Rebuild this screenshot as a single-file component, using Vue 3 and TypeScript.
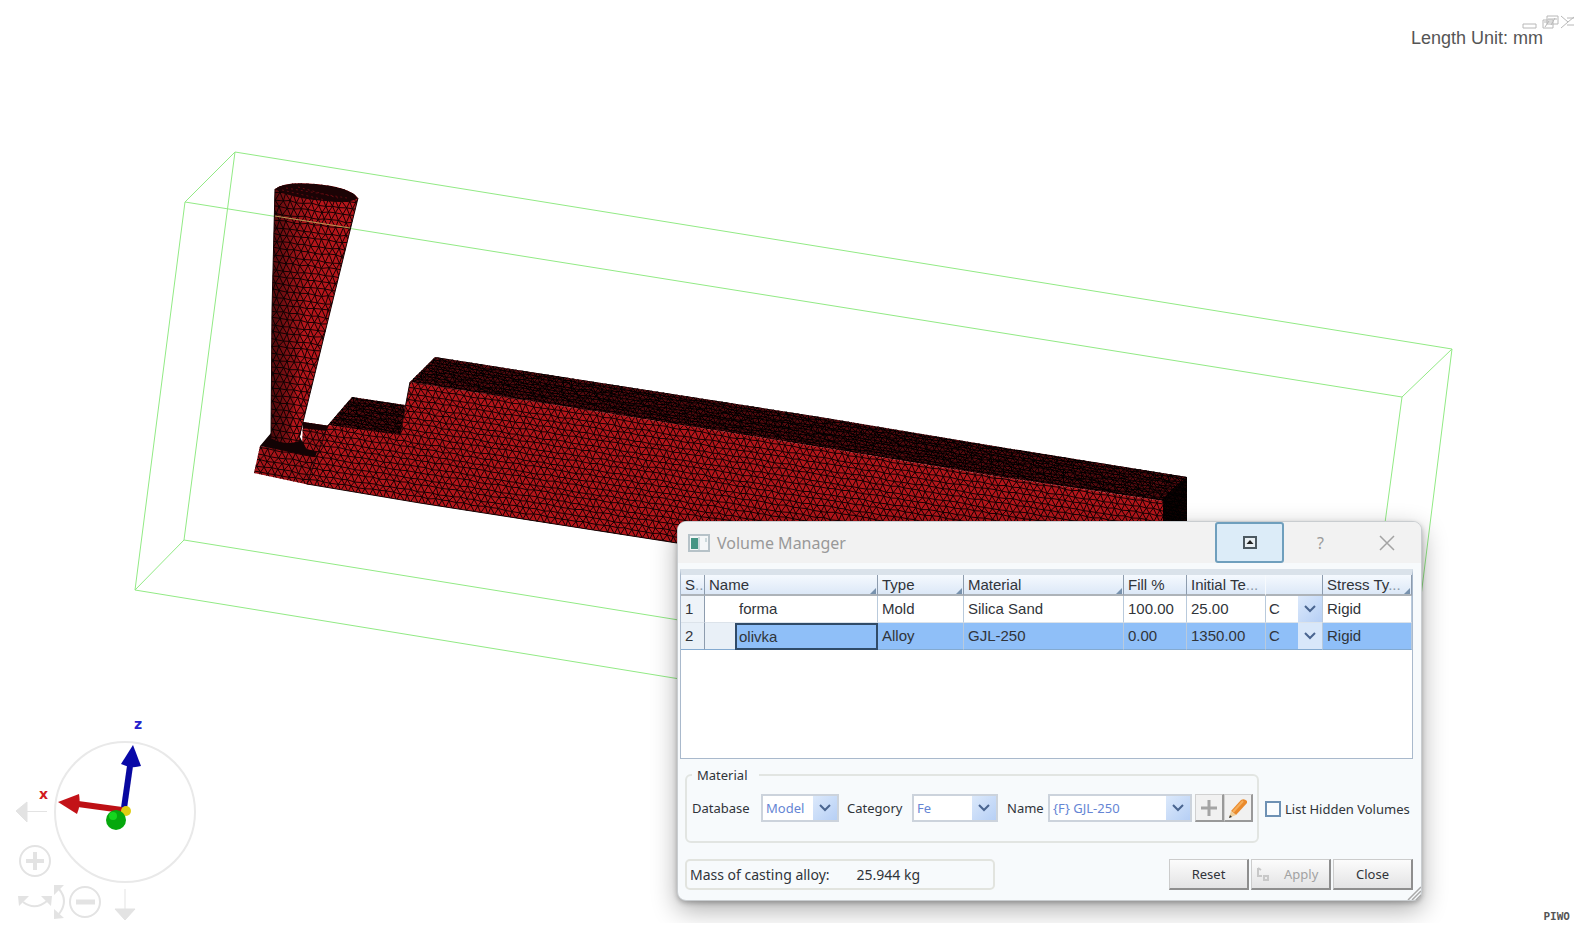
<script setup lang="ts">
import { ref } from 'vue'

interface Volume {
  id: number
  name: string
  type: string
  material: string
  fill: string
  temperature: string
  stress: string
}

const volumes: Volume[] = [
  { id: 1, name: 'forma', type: 'Mold', material: 'Silica Sand', fill: '100.00', temperature: '25.00', stress: 'Rigid' },
  { id: 2, name: 'olivka', type: 'Alloy', material: 'GJL-250', fill: '0.00', temperature: '1350.00', stress: 'Rigid' },
]
const selected = ref(2)
const listHidden = ref(false)

// Builds a jittered triangle grid, leaning along the given slope
function mesh(x: number, y: number, w: number, h: number, dx: number, dy: number, slope: number, jitter: number): string {
  let seed = 7
  const rnd = () => {
    seed = (seed * 16807) % 2147483647
    return seed / 2147483647 - 0.5
  }
  const cols = Math.ceil(w / dx)
  const rows = Math.ceil(h / dy)
  const pts: string[][] = []
  for (let r = 0; r <= rows; r++) {
    const line: string[] = []
    for (let c = 0; c <= cols; c++) {
      const px = x + c * dx + (r % 2 ? dx / 2 : 0) + rnd() * dx * jitter
      const py = y + r * dy + c * dx * slope + rnd() * dy * jitter
      line.push(px.toFixed(1) + ' ' + py.toFixed(1))
    }
    pts.push(line)
  }
  const out: string[] = []
  for (let r = 0; r < rows; r++) {
    out.push('M' + pts[r].join('L'))
    const zig: string[] = []
    for (let c = 0; c <= cols; c++) {
      if (r % 2) zig.push(pts[r + 1][c], pts[r][c])
      else zig.push(pts[r][c], pts[r + 1][c])
    }
    out.push('M' + zig.join('L'))
  }
  return out.join('')
}

// The grid rows start higher than the face so that the slope covers all of it
const frontMesh = mesh(250, 345, 930, 240, 7, 6, 0.155, 0.25)
const topMesh = mesh(310, 335, 890, 110, 5, 3, 0.155, 0.6)
const sprueMesh = mesh(262, 170, 104, 285, 7, 7, 0.12, 0.25)
const baseMesh = mesh(250, 405, 75, 85, 7, 6, 0.16, 0.25)
</script>

<template>
  <main class="workspace">
    <svg class="scene" viewBox="0 0 1589 941" role="img" aria-label="Meshed casting model">
      <defs>
        <clipPath id="front"><path d="M410 382L820 447L1000 477L1163 501V560H790L677 543L420 503L307 484L328 425L400 435Z" /></clipPath>
        <clipPath id="tops"><path d="M410 382L435 357L820 417L1000 447L1187 477V560H1163V501L1000 477L820 447ZM328 425L352 397L405 405L402 437Z" /></clipPath>
        <clipPath id="sprue"><path d="M275 189Q285 181 316 184Q350 187 358 198L303 422L299 441Q285 446 271 438L272 310Z" /></clipPath>
        <clipPath id="base"><path d="M260 446L316 455L310 485L254 473ZM303 422L330 426L315 462L302 446Z" /></clipPath>
        <linearGradient id="shade" x1="0" x2="1">
          <stop offset="0" stop-color="#000" stop-opacity=".6" />
          <stop offset=".5" stop-color="#000" stop-opacity=".2" />
          <stop offset="1" stop-color="#000" stop-opacity="0" />
        </linearGradient>
      </defs>

      <path class="bounds" d="M235 152L1452 349L1402 397L185 202ZM185 202L135 590L184 540L235 152M135 590L790 697M184 540L790 638M1402 397L1380 560M1452 349L1413 660" />

      <g clip-path="url(#base)">
        <rect x="250" y="415" width="80" height="75" fill="#a51419" />
        <path :d="baseMesh" class="wire" />
        <path d="M302 421L331 425L327 431L301 428Z" fill="#180305" />
      </g>
      <path d="M260 446L271 433L300 437L306 449L317 452L315 457Z" fill="#120304" />
      <g clip-path="url(#tops)">
        <rect x="300" y="340" width="900" height="230" fill="#540a0e" />
        <path :d="topMesh" class="wire dense" />
        <path d="M1163 498L1187 477V560H1163Z" fill="#000" opacity=".8" />
      </g>
      <g clip-path="url(#front)">
        <rect x="300" y="370" width="880" height="200" fill="#b4161b" />
        <path :d="frontMesh" class="wire" />
      </g>
      <g clip-path="url(#sprue)">
        <rect x="260" y="175" width="110" height="280" fill="#b5161b" />
        <path :d="sprueMesh" class="wire" />
        <path d="M270 180L316 190L290 445H270Z" fill="url(#shade)" />
        <path d="M275 189Q285 181 316 184Q350 187 358 198Q350 204 325 201Q290 198 275 189Z" fill="#1b0305" />
        <path d="M286 188L347 198M298 187L338 198M282 190L325 200" stroke="#610b10" stroke-dasharray="2 3" />
      </g>
      <path d="M275 189L272 310L271 438M358 198L303 422L299 438M410 382L400 435M328 425L307 484L420 503L677 543L790 560" class="edge" />
      <path d="M275 216L350 228" stroke="#b99a54" fill="none" />

      <circle cx="125" cy="812" r="70" fill="none" stroke="#e9e9e9" stroke-width="2" />
      <path d="M124 808L130 766" stroke="#0808a0" stroke-width="6" />
      <path d="M133 745L141 766Q131 769 121 764Z" fill="#0808a8" />
      <path d="M122 810L78 804" stroke="#bd1015" stroke-width="6" />
      <path d="M58 802L79 794Q81 805 77 814Z" fill="#c31218" />
      <circle cx="126" cy="811" r="5" fill="#dfce12" />
      <circle cx="116" cy="820" r="10" fill="#05a80d" />
      <circle cx="113" cy="816" r="4" fill="#15d61e" />
      <text x="134" y="729" class="axis" fill="#2522cc">z</text>
      <text x="39" y="799" class="axis" fill="#d21a20">x</text>

      <g fill="#e3e3e3" stroke="#e3e3e3">
        <path d="M16 811L27 802V822ZM27 811.500H47" />
        <path d="M125 889V910M115 909H135L125 920Z" />
        <circle cx="35" cy="861" r="15" fill="none" stroke-width="2" />
        <path d="M26 861H44M35 852V870" stroke-width="4" />
        <circle cx="85" cy="902" r="15" fill="none" stroke-width="2" />
        <path d="M76 902H95" stroke-width="5" />
        <path d="M18 896L29 896L19 906ZM52 896L41 896L51 906ZM54 885H64L54 895ZM54 909V919L64 918Z" stroke="none" />
        <path d="M23 902Q35 911 47 901M59 889Q69 901 59 914" fill="none" stroke-width="2" />
      </g>
    </svg>

    <div class="unit">Length Unit: mm</div>
    <div class="mdi" aria-hidden="true">
      <svg width="54" height="16" viewBox="0 0 54 16" fill="none" stroke="#b8b8b8">
        <path d="M3 9H16V13H3ZM23 5H33V13H23ZM27 1H38V9H27ZM24 7H32M28 4H37M29 6L25 12M35 3L31 10" />
        <path d="M41 1L48 7L41 13M54 2L48 7M47 10H54M47 3H54" />
      </svg>
    </div>
    <div class="stamp">PIWO</div>

    <section class="dialog" aria-labelledby="dialog-title">
      <header class="titlebar">
        <svg width="22" height="18" viewBox="0 0 22 18" aria-hidden="true">
          <rect x="1" y="1" width="20" height="16" fill="#f4f7f8" stroke="#b6c2c8" stroke-width="2" />
          <rect x="3" y="4" width="7" height="11" fill="#459584" />
          <path d="M11 3V16M18 4V8" stroke="#a5bcc0" />
        </svg>
        <h1 id="dialog-title">Volume Manager</h1>
        <button class="roll" type="button" aria-label="Roll up">
          <svg width="14" height="13" viewBox="0 0 14 13"><rect x="1" y="1" width="12" height="11" fill="#e9f0f4" stroke="#4c5961" stroke-width="2" /><path d="M3.500 8L7 4L10.500 8Z" fill="#222" /></svg>
        </button>
        <button class="plain help" type="button" aria-label="Help">?</button>
        <button class="plain" type="button" aria-label="Close window">
          <svg width="16" height="16" viewBox="0 0 16 16"><path d="M1 1L15 15M15 1L1 15" stroke="#a3a3a3" stroke-width="1.500" /></svg>
        </button>
      </header>

      <div class="content">
        <div class="grid-box">
          <table>
            <colgroup>
              <col class="c-id" /><col class="c-indent" /><col class="c-name" /><col class="c-type" /><col class="c-material" />
              <col class="c-fill" /><col class="c-temp" /><col class="c-unit" /><col />
            </colgroup>
            <thead>
              <tr>
                <th>S<i>..</i></th>
                <th colspan="2" class="sort">Name</th>
                <th class="sort">Type</th>
                <th class="sort">Material</th>
                <th>Fill %</th>
                <th class="soft">Initial Te<i>...</i></th>
                <th aria-label="Unit"></th>
                <th class="sort">Stress Ty<i>...</i></th>
              </tr>
            </thead>
            <tbody>
              <tr v-for="v in volumes" :key="v.id" :class="{ picked: v.id === selected }" @click="selected = v.id">
                <td class="index">{{ v.id }}</td>
                <td class="indent"></td>
                <td class="name">{{ v.name }}</td>
                <td>{{ v.type }}</td>
                <td>{{ v.material }}</td>
                <td>{{ v.fill }}</td>
                <td>{{ v.temperature }}</td>
                <td class="unit-cell">
                  <span class="combo">
                    <select :aria-label="'Temperature unit for ' + v.name"><option>C</option></select>
                    <span class="arrow"><svg width="12" height="8" viewBox="0 0 12 8"><path d="M1 1L6 6L11 1" /></svg></span>
                  </span>
                </td>
                <td>{{ v.stress }}</td>
              </tr>
            </tbody>
          </table>
        </div>

        <div class="options">
          <fieldset>
            <legend>Material</legend>
            <label for="database">Database</label>
            <span class="combo database">
              <select id="database"><option>Model</option></select>
              <span class="arrow"><svg width="12" height="8" viewBox="0 0 12 8"><path d="M1 1L6 6L11 1" /></svg></span>
            </span>
            <label for="category">Category</label>
            <span class="combo category">
              <select id="category"><option>Fe</option></select>
              <span class="arrow"><svg width="12" height="8" viewBox="0 0 12 8"><path d="M1 1L6 6L11 1" /></svg></span>
            </span>
            <label for="material" class="name-label">Name</label>
            <span class="combo material">
              <select id="material"><option>{F} GJL-250</option></select>
              <span class="arrow"><svg width="12" height="8" viewBox="0 0 12 8"><path d="M1 1L6 6L11 1" /></svg></span>
            </span>
            <button class="tool" type="button" aria-label="Add material">
              <svg width="18" height="18" viewBox="0 0 18 18"><path d="M1 9H17M9 1V17" stroke="#a4a4a4" stroke-width="3" /></svg>
            </button>
            <button class="tool" type="button" aria-label="Edit material">
              <svg width="20" height="20" viewBox="0 0 20 20">
                <path d="M3 13L13 2Q16 0 19 3L19 5L8 17Z" fill="#ea8a2c" />
                <path d="M5 14L15 3" stroke="#f6ae5c" stroke-width="2" />
                <path d="M3 13L8 17L1 20Z" fill="#efcf9c" />
                <path d="M1 20L2 17L4 19Z" fill="#333" />
              </svg>
            </button>
          </fieldset>
          <label class="check"><input v-model="listHidden" type="checkbox" />List Hidden Volumes</label>
        </div>

        <footer>
          <div class="mass"><span>Mass of casting alloy:</span><output>25.944 kg</output></div>
          <div class="actions">
            <button type="button">Reset</button>
            <button type="button" class="apply" disabled>
              <svg width="14" height="14" viewBox="0 0 14 14" fill="none" stroke="#c8c8c8" stroke-width="2"><path d="M2 1V9H6M5 3L2 1M8 9H12V13H8Z" /></svg>
              Apply
            </button>
            <button type="button">Close</button>
          </div>
        </footer>
      </div>
      <svg class="grip" width="14" height="14" viewBox="0 0 14 14" aria-hidden="true"><path d="M1 14L14 1M5 14L14 5M9 14L14 9" stroke="#a9a9a9" stroke-width="1.500" /></svg>
    </section>
  </main>
</template>

<style>
html,
body {
  background: #fff;
}
</style>

<style scoped>
.workspace {
  position: relative;
  overflow: hidden;
  min-height: 923px;
  margin-right: 15px;
  color: #30343a;
  font: 13px/20px "Noto Sans", sans-serif;
}
* {
  box-sizing: border-box;
}
svg {
  display: block;
}
.scene {
  width: calc(100% + 15px);
  height: auto;
  margin-bottom: -18px;
}
.bounds {
  fill: none;
  stroke: #92ea85;
  stroke-width: 1;
}
.wire {
  fill: none;
  stroke: #160203;
  stroke-width: 1;
}
.dense {
  stroke: #000;
}
.edge {
  fill: none;
  stroke: #180405;
  stroke-width: 1;
}
.axis {
  font: bold 14px "DejaVu Sans", sans-serif;
}
.unit {
  position: absolute;
  top: 28px;
  right: 31px;
  color: #555;
  font: 18px/20px "Liberation Sans", sans-serif;
}
.mdi {
  position: absolute;
  top: 15px;
  right: 0;
}
.stamp {
  position: absolute;
  right: 4px;
  bottom: 0;
  color: #555;
  font: bold 11px/12px "DejaVu Sans Mono", monospace;
}
.dialog {
  position: absolute;
  top: 521px;
  left: 677px;
  width: 745px;
  border: 1px solid #c9cdd0;
  border-radius: 9px;
  background: #f7fafc;
  box-shadow: 0 9px 26px rgba(0, 0, 0, 0.32), 0 2px 5px rgba(0, 0, 0, 0.25);
}
.titlebar {
  display: flex;
  align-items: center;
  height: 41px;
  padding-left: 10px;
  border-radius: 8px 8px 0 0;
  background: #f2f2f2;
}
h1 {
  flex: 1;
  margin: 0 0 0 7px;
  color: #999;
  font: 16px/24px "Noto Sans", sans-serif;
}
button {
  padding: 0;
  color: inherit;
  font: inherit;
}
.roll {
  display: grid;
  place-items: center;
  width: 69px;
  height: 41px;
  border: 2px solid #6f9fbd;
  border-radius: 3px;
  background: #dcecf8;
}
.plain {
  display: grid;
  place-items: center;
  width: 60px;
  height: 41px;
  margin-right: 4px;
  border: 0;
  background: none;
  color: #9b9b9b;
  font-size: 16px;
}
.help {
  width: 73px;
  margin-right: 0;
}
.content {
  padding: 6px 8px 10px 2px;
}
.grid-box {
  height: 190px;
  border: 1px solid #a9b9cc;
  border-top: 6px solid #dae2ea;
  background: #fff;
}
table {
  width: 100%;
  table-layout: fixed;
  border-collapse: separate;
  border-spacing: 0;
  font: 15px/20px "Liberation Sans", sans-serif;
}
.c-id {
  width: 24px;
}
.c-indent {
  width: 30px;
}
.c-name {
  width: 143px;
}
.c-type {
  width: 86px;
}
.c-material {
  width: 160px;
}
.c-fill {
  width: 63px;
}
.c-temp {
  width: 79px;
}
.c-unit {
  width: 57px;
}
th {
  position: relative;
  height: 21px;
  padding: 0 0 0 4px;
  overflow: hidden;
  border-right: 1px solid #8d9cae;
  border-bottom: 2px solid #adb3b9;
  background: linear-gradient(#f5f9fe, #dce8f7);
  font-weight: normal;
  line-height: 18px;
  text-align: left;
  white-space: nowrap;
}
th.soft {
  border-right-color: #f7fafd;
}
th i {
  color: #8998a8;
  font-style: normal;
}
.sort::after {
  position: absolute;
  right: 1px;
  bottom: 0;
  border-bottom: 6px solid #7892ae;
  border-left: 6px solid transparent;
  content: "";
}
td {
  height: 27px;
  padding: 0 0 0 4px;
  border-right: 1px solid #b9cadc;
  border-bottom: 1px solid #dce3ea;
}
.index,
.indent {
  border-right-color: #8d9cae;
}
.index {
  background: #eef3f8;
}
.indent {
  border-right: 0;
}
.picked td {
  border-bottom-color: #84aad0;
  background: #8fbff8;
}
.picked td.index,
.picked td.indent {
  background: #e9f0f7;
}
.picked td.name {
  padding-left: 2px;
  border: 2px solid #304b68;
}
td.unit-cell {
  padding: 0;
}
.combo {
  position: relative;
  display: flex;
  height: 28px;
  border: 2px solid #ccd3dc;
  background: #fff;
}
select {
  width: 100%;
  padding: 0 0 0 3px;
  border: 0;
  border-radius: 0;
  outline: 0;
  appearance: none;
  background: transparent;
  color: #6585d4;
  font: inherit;
}
.arrow {
  position: absolute;
  top: 0;
  right: 0;
  bottom: 0;
  display: grid;
  place-items: center;
  width: 24px;
  background: linear-gradient(135deg, #dce9fb, #b6cff5);
  pointer-events: none;
}
.arrow path {
  fill: none;
  stroke: #4a6590;
  stroke-width: 2;
}
.unit-cell .combo {
  height: 26px;
  border: 0;
  background: transparent;
}
.unit-cell select {
  color: inherit;
}
.picked .arrow {
  background: #d8e7fa;
}
.options {
  display: flex;
  align-items: center;
  gap: 6px;
  margin: 6px 0 0 5px;
}
fieldset {
  display: flex;
  flex: none;
  align-items: center;
  width: 574px;
  height: 78px;
  margin: 0;
  padding: 0 4px 10px 5px;
  border: 2px solid #e2e5e2;
  border-radius: 6px;
}
legend {
  padding: 0 12px 0 5px;
}
fieldset label {
  flex: none;
  width: 69px;
}
.database {
  width: 78px;
  margin-right: 8px;
}
.category {
  width: 86px;
}
label[for="category"] {
  width: 65px;
}
fieldset .name-label {
  width: 41px;
  margin-left: 9px;
}
.material {
  flex: 1;
  margin-right: 3px;
}
.tool {
  display: grid;
  place-items: center;
  width: 29px;
  height: 28px;
  border: 1px solid #d0d0d0;
  border-right: 2px solid #999;
  border-bottom: 2px solid #999;
  background: #f1f1f1;
}
.check {
  display: flex;
  align-items: center;
  gap: 4px;
  padding-top: 10px;
  white-space: nowrap;
}
.check input {
  width: 16px;
  height: 16px;
  margin: 0;
  border: 2px solid #6e91b4;
  appearance: none;
  background: #fafcfe;
}
.check input:checked {
  background: #6e91b4;
}
footer {
  display: flex;
  justify-content: space-between;
  margin: 16px 0 0 5px;
}
.mass {
  display: flex;
  align-items: center;
  gap: 27px;
  width: 310px;
  height: 31px;
  padding-left: 3px;
  border: 2px solid #e2e4df;
  border-radius: 5px;
  font-size: 14px;
}
.actions {
  display: flex;
  gap: 2px;
}
.actions button {
  width: 80px;
  height: 31px;
  border: 1px solid #ccc;
  border-right: 2px solid #8e8e8e;
  border-bottom: 2px solid #8e8e8e;
  background: linear-gradient(#fcfcfc, #e3e3e4);
}
.actions .apply {
  display: flex;
  align-items: center;
  gap: 14px;
  padding-left: 4px;
  color: #a2a2a2;
}
.grip {
  position: absolute;
  right: 0;
  bottom: 0;
}
</style>
